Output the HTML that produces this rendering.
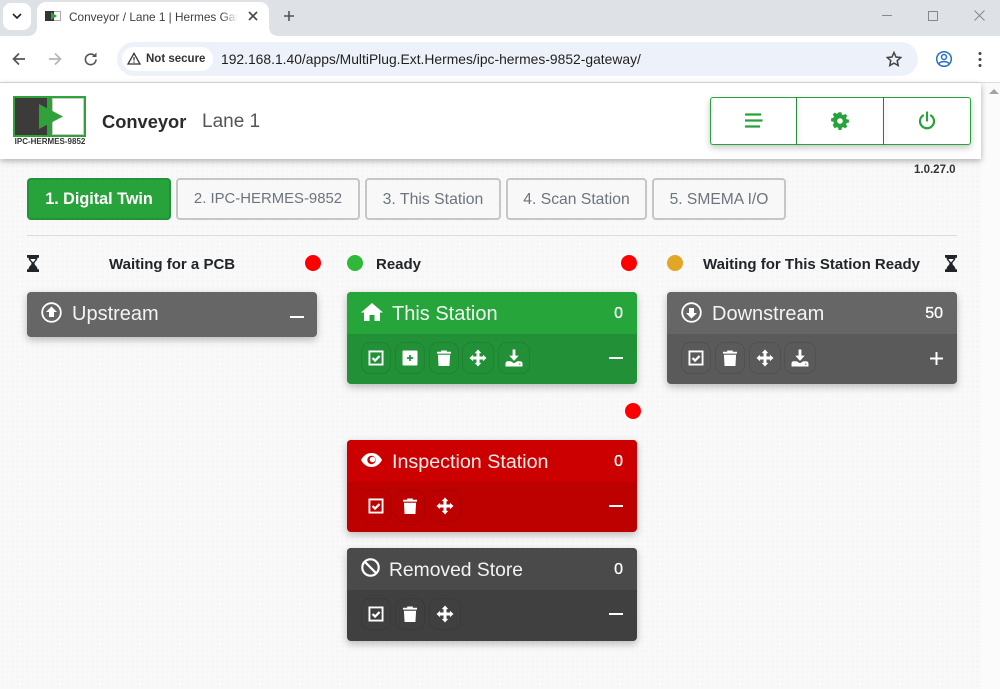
<!DOCTYPE html>
<html><head><meta charset="utf-8"><title>Conveyor / Lane 1 | Hermes Gateway</title>
<style>
*{box-sizing:border-box}
html,body{margin:0;padding:0;width:1000px;height:689px;overflow:hidden;background:#fff;font-family:"Liberation Sans",sans-serif;color:#212529}
.a{position:absolute}
.t{position:absolute;white-space:nowrap}
#bg{left:0;top:159px;width:981px;height:530px;background-color:#f9f9f9;background-image:radial-gradient(#f4f4f4 1px,transparent 1.2px);background-size:5px 5px}
.tab{position:absolute;top:178px;height:42px;border:2px solid #c6c6c6;border-radius:4px;background:#f8f8f8;color:#6c757d;font-size:15.8px;line-height:39px;text-align:center;white-space:nowrap}
.card{position:absolute;width:290px;border-radius:4px;box-shadow:0 3px 8px rgba(0,0,0,.25);overflow:hidden;color:#fff}
.hd{position:absolute;left:0;top:0;width:100%;height:42px}
.ft{position:absolute;left:0;top:42px;width:100%;height:50px}
.ttl{position:absolute;top:9px;font-size:20px;line-height:26px;white-space:nowrap;color:rgba(255,255,255,.93)}
.cnt{position:absolute;right:14px;top:11px;font-size:16px;line-height:21px;-webkit-text-stroke:.3px #fff}
.btn{position:absolute;top:8px;height:32px;border:1px solid rgba(0,0,0,.09);border-radius:9px}
.btn svg{position:absolute;left:50%;top:50%;transform:translate(-50%,-50%)}
.dot{position:absolute;width:16px;height:16px;border-radius:50%}
.st{position:absolute;top:256px;font-size:15px;font-weight:bold;line-height:18px;white-space:nowrap;color:#212529}
.min{position:absolute;width:14px;height:2px;background:#fff}
</style></head><body>

<!-- browser chrome -->
<div class="a" style="left:0;top:0;width:1000px;height:36px;background:#dee1e6"></div>
<div class="a" style="left:3px;top:3px;width:28px;height:27px;background:#fff;border-radius:8px"></div>
<svg class="a" style="left:11px;top:12px" width="12" height="9"><path d="M2 2l4 4 4-4" fill="none" stroke="#222" stroke-width="1.6"/></svg>
<div class="a" style="left:37px;top:2px;width:232px;height:35px;background:#fff;border-radius:9px 9px 0 0"></div>
<div class="a" style="left:29px;top:28px;width:8px;height:8px;background:radial-gradient(circle at 0 0,#dee1e6 7.500px,#fff 8px)"></div>
<div class="a" style="left:269px;top:28px;width:8px;height:8px;background:radial-gradient(circle at 100% 0,#dee1e6 7.500px,#fff 8px)"></div>
<div class="a" style="left:45px;top:11px;width:16px;height:10px;background:#fff;border:1px solid #aaa"></div>
<div class="a" style="left:45px;top:11px;width:9px;height:10px;background:#333"></div>
<svg class="a" style="left:50px;top:12px" width="8" height="8"><path d="M1 0l6 4-6 4z" fill="#2fa33a"/></svg>
<div class="t" style="left:69px;top:9px;width:168px;overflow:hidden;font-size:11.8px;line-height:16px;color:#3c4043">Conveyor / Lane 1 | Hermes Gateway</div>
<div class="a" style="left:222px;top:9px;width:16px;height:16px;background:linear-gradient(90deg,rgba(255,255,255,0),#fff)"></div>
<svg class="a" style="left:248px;top:11px" width="10" height="10"><path d="M1 1l8 8M9 1l-8 8" stroke="#444" stroke-width="1.6"/></svg>
<svg class="a" style="left:284px;top:11px" width="10" height="10"><path d="M5 0v10M0 5h10" stroke="#555" stroke-width="1.6"/></svg>
<svg class="a" style="left:880px;top:10px" width="60" height="12"><path d="M2 5.500h10" stroke="#888" stroke-width="1"/><rect x="48.500" y="1.500" width="9" height="9" fill="none" stroke="#888"/></svg>
<svg class="a" style="left:974px;top:10px" width="11" height="11"><path d="M.5.500l10 10M10.500.500l-10 10" stroke="#888" fill="none"/></svg>

<div class="a" style="left:0;top:36px;width:1000px;height:46px;background:#fff;border-radius:0 9px 0 0"></div>
<div class="a" style="left:0;top:82px;width:1000px;height:1px;background:#ddd"></div>
<svg class="a" style="left:11px;top:51px" width="16" height="16"><path d="M14 8H2.500M8 2.500L2.500 8 8 13.500" fill="none" stroke="#555" stroke-width="1.7"/></svg>
<svg class="a" style="left:47px;top:51px" width="16" height="16"><path d="M2 8h11.500M8 2.500L13.500 8 8 13.500" fill="none" stroke="#b5b5b5" stroke-width="1.7"/></svg>
<svg class="a" style="left:83px;top:51px" width="16" height="16"><path d="M13 8.500a5.300 5.300 0 1 1-1.600-3.900" fill="none" stroke="#555" stroke-width="1.6"/><path d="M13.500 1.500v4.500H9z" fill="#555"/></svg>
<div class="a" style="left:117px;top:42px;width:801px;height:34px;background:#edf2fa;border-radius:17px"></div>
<div class="a" style="left:122px;top:47px;width:91px;height:24px;background:#fff;border-radius:12px"></div>
<svg class="a" style="left:127px;top:52px" width="14" height="13"><path d="M7 1.300L13 12H1z" fill="none" stroke="#333" stroke-width="1.300"/><path d="M7 5v3.500M7 9.500v1.300" stroke="#333" stroke-width="1.200"/></svg>
<div class="t" style="left:146px;top:51px;font-size:11.5px;font-weight:bold;line-height:16px;color:#333">Not secure</div>
<div class="t" style="left:221px;top:51px;font-size:13.870px;line-height:17px;color:#1f1f1f">192.168.1.40/apps/MultiPlug.Ext.Hermes/ipc-hermes-9852-gateway/</div>
<svg class="a" style="left:886px;top:51px" width="16" height="16"><path d="M8 1.500l2 4.500 4.800.5-3.600 3.200 1 4.800L8 12.100l-4.200 2.400 1-4.800L1.200 6.500 6 6z" fill="none" stroke="#444" stroke-width="1.500"/></svg>
<svg class="a" style="left:935px;top:50px" width="18" height="18"><circle cx="9" cy="9" r="7.300" fill="none" stroke="#2a6fc4" stroke-width="1.500"/><circle cx="9" cy="7" r="2.500" fill="none" stroke="#2a6fc4" stroke-width="1.500"/><path d="M4 13.500c2-2.500 8-2.500 10 0" fill="none" stroke="#2a6fc4" stroke-width="1.500"/></svg>
<svg class="a" style="left:977px;top:51px" width="6" height="16"><circle cx="3" cy="2.500" r="1.500" fill="#444"/><circle cx="3" cy="8.500" r="1.500" fill="#444"/><circle cx="3" cy="14.500" r="1.500" fill="#444"/></svg>

<!-- scrollbar -->
<div class="a" style="left:981px;top:83px;width:19px;height:606px;background:#fbfbfb"></div>
<svg class="a" style="left:989px;top:89px" width="11" height="6"><path d="M5 0l5 5H0z" fill="#a3a3a3"/></svg>

<!-- page bg -->
<div class="a" id="bg"></div>

<!-- header -->
<div class="a" style="left:0;top:83px;width:981px;height:76px;background:#fff;box-shadow:0 2px 6px rgba(0,0,0,.3)"></div>
<div class="a" style="left:13px;top:96px;width:73px;height:41px;background:#2fa33a"></div>
<div class="a" style="left:15px;top:98px;width:32px;height:37px;background:#3d3a3a"></div>
<div class="a" style="left:52px;top:98px;width:32px;height:37px;background:#fff;border:1px solid #ccc"></div>
<svg class="a" style="left:39px;top:104px" width="25" height="25"><path d="M0 0l24 12.500L0 25z" fill="#2fa33a"/></svg>
<div class="t" style="left:10px;top:137px;width:80px;text-align:center;font-size:8px;font-weight:bold;line-height:10px;color:#333">IPC-HERMES-9852</div>
<div class="t" style="left:102px;top:109px;font-size:18.3px;font-weight:bold;line-height:25px;color:#2b2b2b">Conveyor</div>
<div class="t" style="left:202px;top:109px;font-size:19px;line-height:25px;color:#555">Lane 1</div>

<div class="a" style="left:710px;top:97px;width:261px;height:48px;background:#fff;border:1px solid #28a23b;border-radius:3px;box-shadow:0 3px 7px rgba(0,0,0,.22)"></div>
<div class="a" style="left:796px;top:97px;width:1px;height:48px;background:#2a8c3a;box-shadow:2px 0 4px rgba(0,0,0,.15)"></div>
<div class="a" style="left:883px;top:97px;width:1px;height:48px;background:#2a7c3a;box-shadow:2px 0 4px rgba(0,0,0,.15)"></div>
<svg class="a" style="left:745px;top:113px" width="18" height="15"><path d="M0 1.500h16M0 7.500h17.500M0 13.500h15" stroke="#28a23b" stroke-width="2.300" fill="none"/></svg>
<svg class="a" style="left:831px;top:112px" width="18" height="18" viewBox="0 0 18 18"><path d="M7.400 0h3.200l.5 2.500 1.600.7 2.200-1.400 2.200 2.300-1.400 2.100.7 1.600 2.500.5v3.200l-2.500.5-.7 1.600 1.400 2.100-2.200 2.300-2.200-1.400-1.600.7-.5 2.500H7.400l-.5-2.500-1.600-.7-2.200 1.400L.9 14.200l1.400-2.100-.7-1.600L-.9 10V6.800l2.500-.5.700-1.600L.9 2.600l2.200-2.300 2.200 1.400 1.600-.7z" transform="translate(.9 .2) scale(.9)" fill="#28a23b"/><circle cx="9" cy="9" r="2.800" fill="#fff"/></svg>
<svg class="a" style="left:918px;top:111px" width="18" height="19"><path d="M5 4.500a7 7 0 1 0 8 0" fill="none" stroke="#28a23b" stroke-width="2.200" stroke-linecap="round"/><path d="M9 1.500v8" stroke="#28a23b" stroke-width="2.200" stroke-linecap="round"/></svg>
<div class="t" style="left:914px;top:163px;font-size:11.500px;font-weight:bold;line-height:14px;color:#333">1.0.27.0</div>

<!-- tabs -->
<div class="tab" style="left:27px;width:144px;background:#28a23b;border-color:#22923a;color:#fff;font-weight:bold;font-size:16.200px">1. Digital Twin</div>
<div class="tab" style="left:176px;width:184px;font-size:14.900px">2. IPC-HERMES-9852</div>
<div class="tab" style="left:365px;width:136px">3. This Station</div>
<div class="tab" style="left:506px;width:141px;font-size:15.700px">4. Scan Station</div>
<div class="tab" style="left:652px;width:134px;font-size:15.600px">5. SMEMA I/O</div>
<div class="a" style="left:27px;top:235px;width:930px;height:1px;background:#ddd"></div>

<!-- status row -->
<svg class="a" style="left:27px;top:255px" width="12" height="17"><path d="M0 0h12v2.800H0zM0 14.200h12V17H0z" fill="#212529"/><path d="M1.500 2.500c0 3.500 3 4 3 6s-3 2.500-3 6h9c0-3.500-3-4-3-6s3-2.500 3-6z" fill="#212529"/><path d="M3.500 4h5c-.3 1.300-1.500 2.200-2.500 3.300C5 6.200 3.800 5.300 3.500 4z" fill="#fff"/></svg>
<div class="st" style="left:109px">Waiting for a PCB</div>
<div class="dot" style="left:305px;top:255px;background:#f00"></div>
<div class="dot" style="left:347px;top:255px;background:#2fb83a"></div>
<div class="st" style="left:376px">Ready</div>
<div class="dot" style="left:621px;top:255px;background:#f00"></div>
<div class="dot" style="left:667px;top:255px;background:#e2a526"></div>
<div class="st" style="left:703px">Waiting for This Station Ready</div>
<svg class="a" style="left:945px;top:255px" width="12" height="17"><path d="M0 0h12v2.800H0zM0 14.200h12V17H0z" fill="#212529"/><path d="M1.500 2.500c0 3.500 3 4 3 6s-3 2.500-3 6h9c0-3.500-3-4-3-6s3-2.500 3-6z" fill="#212529"/><path d="M3.500 4h5c-.3 1.300-1.500 2.200-2.500 3.300C5 6.200 3.800 5.300 3.500 4z" fill="#fff"/></svg>
<div class="dot" style="left:625px;top:403px;background:#f00"></div>

<svg width="0" height="0" style="position:absolute"><defs>
<symbol id="chk" viewBox="0 0 16 16"><rect x="1" y="1" width="14" height="14" fill="none" stroke="#fff" stroke-width="2"/><path d="M4.300 8l2.700 2.700 4.800-4.800" fill="none" stroke="#fff" stroke-width="2.400"/></symbol>
<symbol id="trash" viewBox="0 0 16 17"><path d="M.5 1.800h15v2H.5zM5 .5h6v1.500H5zM1.500 5h13l-.7 12H2.200z" fill="#fff"/></symbol>
<symbol id="move" viewBox="0 0 18 18"><path d="M9 3v12M3 9h12" stroke="#fff" stroke-width="3.200"/><path d="M9 0l3.500 3.800h-7zM9 18l-3.500-3.800h7zM0 9l3.800-3.500v7zM18 9l-3.800 3.500v-7z" fill="#fff"/></symbol>
<symbol id="dl" viewBox="0 0 18 18"><path d="M7.500 0h3v6.500H14L9 12 4 6.500h3.500z" fill="#fff"/><path d="M2 12.500h3.500L9 14.500l3.500-2H15c2 0 3 1 3 2.500v3H0v-3c0-1.500 1-2.500 2-2.500z" fill="#fff"/><circle cx="15" cy="15.500" r="1" fill="rgba(0,0,0,.35)"/></symbol>
</defs></svg>

<!-- Upstream -->
<div class="card" style="left:27px;top:292px;height:45px;background:#666">
  <svg class="a" style="left:14px;top:10px" width="21" height="21"><circle cx="10.500" cy="10.500" r="9.300" fill="none" stroke="#fff" stroke-width="1.800"/><path d="M10.500 4.500l5.500 5.500h-3v5h-5v-5H5z" fill="#fff"/></svg>
  <div class="ttl" style="left:45px">Upstream</div>
  <div class="min" style="left:263px;top:24px"></div>
</div>

<!-- This Station -->
<div class="card" style="left:347px;top:292px;height:92px;background:#229037">
  <div class="hd" style="background:#26a53b"></div>
  <svg class="a" style="left:14px;top:11px" width="22" height="18"><path d="M11 0l11 9.500h-3V18h-5.500v-6h-5v6H3V9.500H0z" fill="#fff"/></svg>
  <div class="ttl" style="left:45px">This Station</div>
  <div class="cnt">0</div>
  <div class="ft">
    <div class="btn" style="left:14px;width:30px"><svg width="15" height="15"><use href="#chk"/></svg></div>
    <div class="btn" style="left:48px;width:30px"><svg width="15" height="15"><rect width="15" height="15" rx="1" fill="#fff"/><path d="M7.500 4.500v6M4.500 7.500h6" stroke="#229037" stroke-width="1.700"/></svg></div>
    <div class="btn" style="left:82px;width:30px"><svg width="15" height="16"><use href="#trash"/></svg></div>
    <div class="btn" style="left:115px;width:32px"><svg width="17" height="17"><use href="#move"/></svg></div>
    <div class="btn" style="left:151px;width:32px"><svg width="17" height="17"><use href="#dl"/></svg></div>
    <div class="min" style="left:262px;top:23px"></div>
  </div>
</div>

<!-- Downstream -->
<div class="card" style="left:667px;top:292px;height:92px;background:#5a5a5a">
  <div class="hd" style="background:#666"></div>
  <svg class="a" style="left:14px;top:10px" width="21" height="21"><circle cx="10.500" cy="10.500" r="9.300" fill="none" stroke="#fff" stroke-width="1.800"/><path d="M10.500 16.500L5 11h3V6h5v5h3z" fill="#fff"/></svg>
  <div class="ttl" style="left:45px">Downstream</div>
  <div class="cnt">50</div>
  <div class="ft">
    <div class="btn" style="left:14px;width:30px"><svg width="15" height="15"><use href="#chk"/></svg></div>
    <div class="btn" style="left:48px;width:30px"><svg width="15" height="16"><use href="#trash"/></svg></div>
    <div class="btn" style="left:82px;width:32px"><svg width="17" height="17"><use href="#move"/></svg></div>
    <div class="btn" style="left:117px;width:32px"><svg width="17" height="17"><use href="#dl"/></svg></div>
    <svg class="a" style="left:263px;top:18px" width="13" height="13"><path d="M6.500 0v13M0 6.500h13" stroke="#fff" stroke-width="2"/></svg>
  </div>
</div>

<!-- Inspection Station -->
<div class="card" style="left:347px;top:440px;height:92px;background:#bd0000">
  <div class="hd" style="background:#cc0000"></div>
  <svg class="a" style="left:14px;top:12px" width="21" height="16"><path d="M10.500 1C16 1 19.500 5 21 8c-1.500 3-5 7-10.500 7S1.500 11 0 8c1.500-3 5-7 10.500-7z" fill="#fff"/><circle cx="10.500" cy="8" r="4.200" fill="#cc0000"/><circle cx="11.500" cy="7.500" r="2.800" fill="#fff"/></svg>
  <div class="ttl" style="left:45px;font-size:19.700px">Inspection Station</div>
  <div class="cnt">0</div>
  <div class="ft">
    <div class="btn" style="left:14px;width:30px"><svg width="15" height="15"><use href="#chk"/></svg></div>
    <div class="btn" style="left:48px;width:30px"><svg width="15" height="16"><use href="#trash"/></svg></div>
    <div class="btn" style="left:82px;width:32px"><svg width="17" height="17"><use href="#move"/></svg></div>
    <div class="min" style="left:262px;top:23px"></div>
  </div>
</div>

<!-- Removed Store -->
<div class="card" style="left:347px;top:548px;height:93px;background:#404040">
  <div class="hd" style="background:#4a4a4a"></div>
  <svg class="a" style="left:14px;top:10px" width="19" height="19"><circle cx="9.500" cy="9.500" r="8.200" fill="none" stroke="#fff" stroke-width="2.200"/><path d="M3.800 3.800l11.400 11.400" stroke="#fff" stroke-width="2.200"/></svg>
  <div class="ttl" style="left:42px;top:10px;font-size:19.300px">Removed Store</div>
  <div class="cnt">0</div>
  <div class="ft">
    <div class="btn" style="left:14px;width:30px"><svg width="15" height="15"><use href="#chk"/></svg></div>
    <div class="btn" style="left:48px;width:30px"><svg width="15" height="16"><use href="#trash"/></svg></div>
    <div class="btn" style="left:82px;width:32px"><svg width="17" height="17"><use href="#move"/></svg></div>
    <div class="min" style="left:262px;top:23px"></div>
  </div>
</div>
</body></html>
